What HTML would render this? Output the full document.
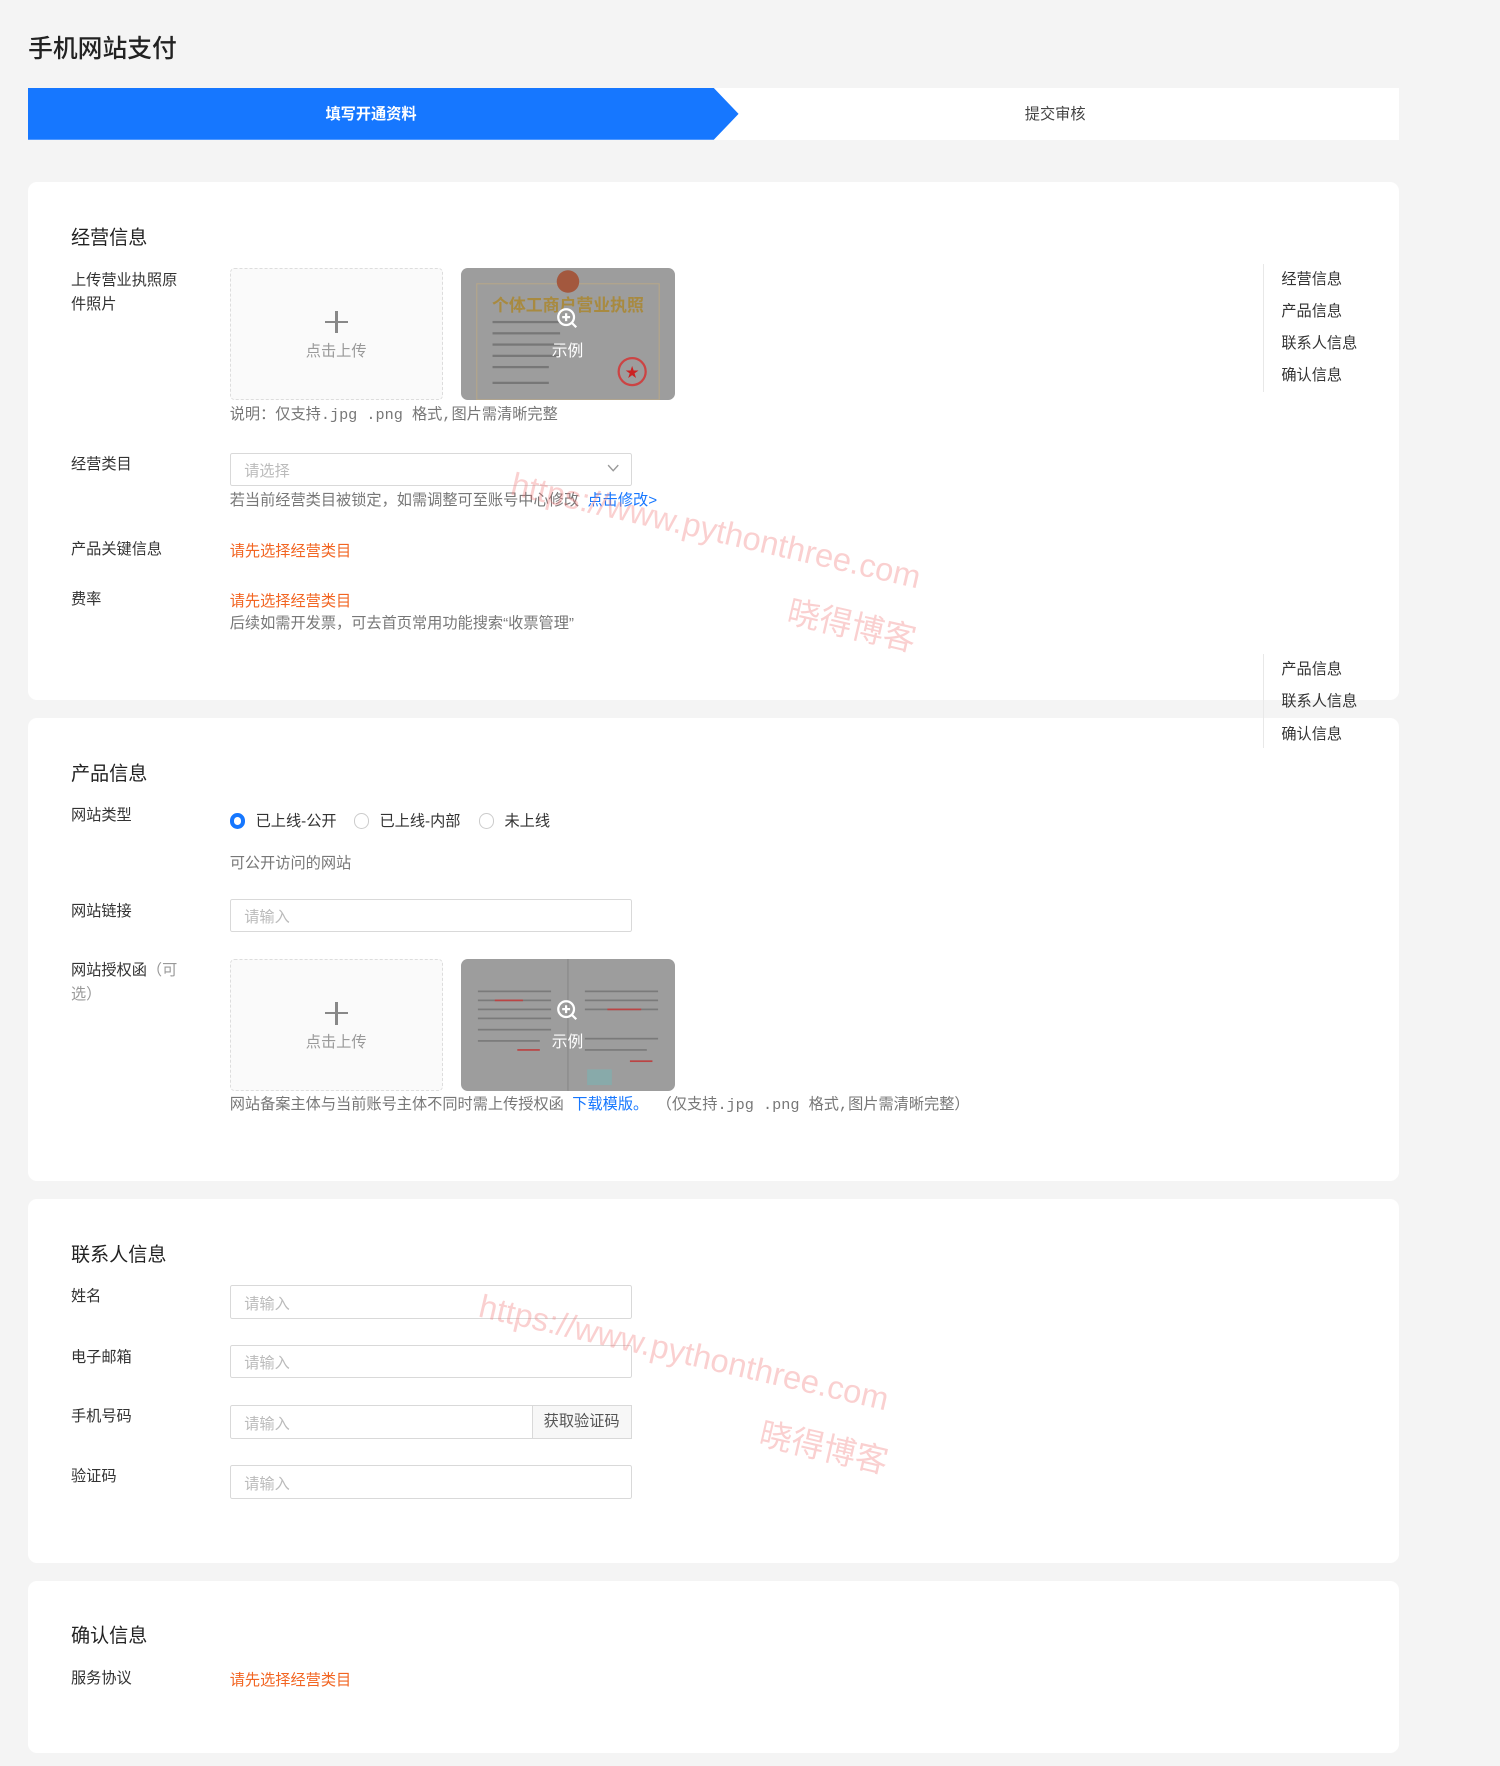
<!DOCTYPE html>
<html><head><meta charset="utf-8"><style>
*{margin:0;padding:0;box-sizing:border-box}
html,body{width:1500px;height:1766px;background:#f4f4f4;overflow:hidden}
body{font-family:"Liberation Sans","Noto Sans CJK SC",sans-serif;color:#333}
#w{position:relative;width:1332px;height:1568px;zoom:1.1261}
.a{position:absolute;white-space:nowrap}
.t{font-size:22px;font-weight:500;color:#222}
.panel{position:absolute;left:25px;width:1217px;background:#fff;border-radius:8px}
.h{font-size:17px;color:#222}
.l{font-size:13.5px;color:#333;line-height:21px}
.inp{position:absolute;left:204px;width:357px;height:30px;border:1px solid #d9d9d9;border-radius:2px;font-size:13.5px;color:#bbb;padding:5px 12px;background:#fff}
.up{position:absolute;left:204px;width:189px;height:117px;border:1px dashed #ddd;border-radius:4px;background:#fafafa}
.up .p{position:absolute;left:84px;top:37px;width:20px;height:20px}
.up .p:before{content:"";position:absolute;left:9px;top:0;width:2px;height:20px;background:#888}
.up .p:after{content:"";position:absolute;left:0;top:9px;width:20px;height:2px;background:#888}
.up span{position:absolute;left:0;width:100%;top:62px;text-align:center;font-size:13.5px;color:#999}
.ex{position:absolute;left:409px;width:190px;height:117px;border-radius:6px;background:#9d9d9d;overflow:hidden}
.ex span{position:absolute;left:0;width:100%;top:62px;text-align:center;font-size:14px;color:#fff}
.ex svg.z{position:absolute;left:85px;top:35px}
.g{font-size:13.5px;color:#777}
.m{font-family:"Liberation Mono","Noto Sans CJK SC",monospace;font-size:13.5px}
.o{font-size:13.5px;color:#f26522}
.b{color:#1677ff}
.nav{position:absolute;left:1122px;border-left:1px solid #e8e8e8;padding-left:15px;font-size:13.5px;color:#333}
.nav div{height:28.6px;line-height:28.6px}
.wm{position:absolute;color:rgba(240,120,120,.35);font-size:29px;transform:rotate(13deg);transform-origin:left top;white-space:nowrap}
.rad{position:absolute;width:14px;height:14px;border:1px solid #ccc;border-radius:50%;background:#fff}
</style></head><body><div id="w">
<div class="a t" style="left:25px;top:26px">手机网站支付</div>
<div class="a" style="left:25px;top:78px;width:1217px;height:46px;background:#fff"></div>
<svg class="a" style="left:25px;top:78px" width="632" height="46"><polygon points="0,0 609,0 631,23 609,46 0,46" fill="#1677ff"/></svg>
<div class="a" style="left:25px;top:79px;width:609px;line-height:46px;text-align:center;color:#fff;font-size:13.5px;font-weight:bold">填写开通资料</div>
<div class="a" style="left:656px;top:79px;width:562px;line-height:46px;text-align:center;color:#444;font-size:13.5px">提交审核</div>

<div class="panel" style="top:162px;height:460px"></div>
<div class="panel" style="top:638px;height:411px"></div>
<div class="panel" style="top:1065px;height:323px"></div>
<div class="panel" style="top:1404px;height:153px"></div>

<div class="a h" style="left:63px;top:197px">经营信息</div>
<div class="a l" style="left:63px;top:239px;white-space:normal;width:100px">上传营业执照原件照片</div>
<div class="up" style="top:238px"><div class="p"></div><span>点击上传</span></div>
<div class="ex" style="top:238px">
<svg width="190" height="117" style="position:absolute;left:0;top:0"><rect x="14" y="14" width="162" height="103" fill="none" stroke="#b5a68a" stroke-width="1"/><circle cx="95" cy="12" r="10" fill="#a3583e"/><text x="95" y="38" text-anchor="middle" font-size="15" fill="#a88a40" font-family="Noto Sans CJK SC" font-weight="bold">个体工商户营业执照</text><g fill="#777"><rect x="28" y="47" width="60" height="2"/><rect x="28" y="57" width="60" height="2"/><rect x="28" y="67" width="60" height="2"/><rect x="28" y="77" width="60" height="2"/><rect x="28" y="87" width="50" height="2"/><rect x="28" y="101" width="50" height="2"/></g><circle cx="152" cy="92" r="12" fill="none" stroke="#c44" stroke-width="2"/><text x="152" y="97" text-anchor="middle" font-size="12" fill="#c22">★</text></svg>
<svg class="z" width="20" height="20" viewBox="0 0 20 20"><circle cx="9" cy="9" r="7" fill="none" stroke="#fff" stroke-width="2"/><path d="M9 5.5v7M5.5 9h7M14 14l4 4" stroke="#fff" stroke-width="2"/></svg><span>示例</span></div>
<div class="a g" style="left:204px;top:357px">说明：仅支持<span class="m">.jpg .png </span>格式<span class="m">,</span>图片需清晰完整</div>

<div class="a l" style="left:63px;top:402px">经营类目</div>
<div class="inp" style="top:402px">请选择</div>
<svg class="a" style="left:539px;top:412px" width="11" height="8"><path d="M1 1l4.5 5L10 1" fill="none" stroke="#999" stroke-width="1.2"/></svg>
<div class="a g" style="left:204px;top:433px">若当前经营类目被锁定，如需调整可至账号中心修改 &nbsp;<span class="b">点击修改&gt;</span></div>
<div class="a l" style="left:63px;top:478px">产品关键信息</div>
<div class="a o" style="left:204px;top:479px">请先选择经营类目</div>
<div class="a l" style="left:63px;top:522px">费率</div>
<div class="a o" style="left:204px;top:523px">请先选择经营类目</div>
<div class="a g" style="left:204px;top:543px">后续如需开发票，可去首页常用功能搜索“收票管理”</div>

<div class="nav" style="top:234px;height:114px"><div>经营信息</div><div>产品信息</div><div>联系人信息</div><div>确认信息</div></div>
<div class="nav" style="top:581px;height:83px"><div>产品信息</div><div>联系人信息</div><div>确认信息</div></div>

<div class="a h" style="left:63px;top:673px">产品信息</div>
<div class="a l" style="left:63px;top:714px">网站类型</div>
<div class="rad" style="left:204px;top:722px;border:4px solid #1677ff"></div>
<div class="a l" style="left:227px;top:719px">已上线-公开</div>
<div class="rad" style="left:314px;top:722px"></div>
<div class="a l" style="left:337px;top:719px">已上线-内部</div>
<div class="rad" style="left:425px;top:722px"></div>
<div class="a l" style="left:448px;top:719px">未上线</div>
<div class="a g" style="left:204px;top:756px">可公开访问的网站</div>
<div class="a l" style="left:63px;top:799px">网站链接</div>
<div class="inp" style="top:798px">请输入</div>
<div class="a l" style="left:63px;top:852px;white-space:normal;width:100px">网站授权函<span style="color:#999">（可选）</span></div>
<div class="up" style="top:852px"><div class="p"></div><span>点击上传</span></div>
<div class="ex" style="top:852px">
<svg width="190" height="117" style="position:absolute;left:0;top:0"><line x1="95" y1="0" x2="95" y2="117" stroke="#888"/><g fill="#7a7a7a"><rect x="15" y="28" width="65" height="1.5"/><rect x="15" y="36" width="65" height="1.5"/><rect x="15" y="44" width="65" height="1.5"/><rect x="15" y="52" width="65" height="1.5"/><rect x="15" y="62" width="65" height="1.5"/><rect x="15" y="72" width="55" height="1.5"/><rect x="110" y="28" width="65" height="1.5"/><rect x="110" y="36" width="65" height="1.5"/><rect x="110" y="44" width="65" height="1.5"/><rect x="110" y="70" width="65" height="1.5"/><rect x="110" y="80" width="55" height="1.5"/></g><g fill="#b44"><rect x="30" y="36" width="25" height="1.5"/><rect x="50" y="80" width="20" height="1.5"/><rect x="130" y="44" width="30" height="1.5"/><rect x="150" y="90" width="20" height="1.5"/></g><rect x="112" y="98" width="22" height="14" fill="#8aa"/></svg>
<svg class="z" width="20" height="20" viewBox="0 0 20 20"><circle cx="9" cy="9" r="7" fill="none" stroke="#fff" stroke-width="2"/><path d="M9 5.5v7M5.5 9h7M14 14l4 4" stroke="#fff" stroke-width="2"/></svg><span>示例</span></div>
<div class="a g" style="left:204px;top:970px">网站备案主体与当前账号主体不同时需上传授权函 &nbsp;<span class="b">下载模版。</span> &nbsp;（仅支持<span class="m">.jpg .png </span>格式<span class="m">,</span>图片需清晰完整）</div>

<div class="a h" style="left:63px;top:1100px">联系人信息</div>
<div class="a l" style="left:63px;top:1141px">姓名</div>
<div class="inp" style="top:1141px">请输入</div>
<div class="a l" style="left:63px;top:1195px">电子邮箱</div>
<div class="inp" style="top:1194px">请输入</div>
<div class="a l" style="left:63px;top:1248px">手机号码</div>
<div class="inp" style="top:1248px">请输入</div>
<div class="a" style="left:472px;top:1248px;width:89px;height:30px;border:1px solid #d9d9d9;background:#f7f7f7;font-size:13.5px;color:#555;text-align:center;line-height:28px">获取验证码</div>
<div class="a l" style="left:63px;top:1301px">验证码</div>
<div class="inp" style="top:1301px">请输入</div>

<div class="a h" style="left:63px;top:1439px">确认信息</div>
<div class="a l" style="left:63px;top:1480px">服务协议</div>
<div class="a o" style="left:204px;top:1481px">请先选择经营类目</div>

<div class="wm" style="left:458px;top:413px">https://www.pythonthree.com</div>
<div class="wm" style="left:705px;top:520px">晓得博客</div>
<div class="wm" style="left:430px;top:1143px">https://www.pythonthree.com</div>
<div class="wm" style="left:680px;top:1250px">晓得博客</div>
</div></body></html>
